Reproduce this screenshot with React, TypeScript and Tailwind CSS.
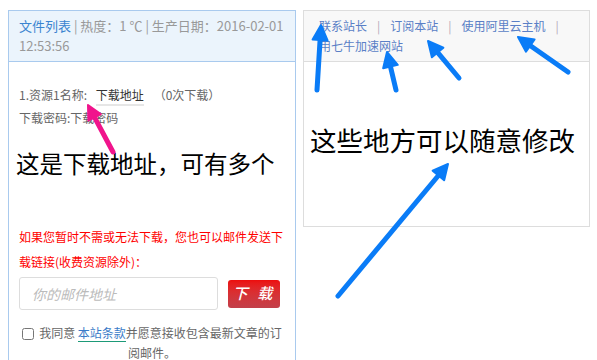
import React from 'react';

const FONT = { fontFamily: '"Microsoft YaHei", "Noto Sans CJK SC", "Noto Sans", sans-serif' };

type ArrowProps = { x1: number; y1: number; x2: number; y2: number; color: string; w?: number; head?: number };

// arrow drawn from tail (x1,y1) to tip (x2,y2)
const Arrow = ({ x1, y1, x2, y2, color, w = 5, head = 15 }: ArrowProps) => {
  const dx = x2 - x1;
  const dy = y2 - y1;
  const len = Math.sqrt(dx * dx + dy * dy);
  const ux = dx / len;
  const uy = dy / len;
  const bx = x2 - ux * head;
  const by = y2 - uy * head;
  const px = -uy * head * 0.5;
  const py = ux * head * 0.5;
  const pts = `${x2},${y2} ${bx + px},${by + py} ${bx - px},${by - py}`;
  return (
    <g>
      <line x1={x1} y1={y1} x2={bx + ux * 2} y2={by + uy * 2} stroke={color} strokeWidth={w} strokeLinecap="round" />
      <polygon points={pts} fill={color} stroke={color} strokeWidth={2} strokeLinejoin="round" />
    </g>
  );
};

const Sep = () => <span className="mx-[10px] text-[#b5a8b8]">|</span>;

const App = () => {
  return (
    <div className="relative w-[597px] h-[360px] overflow-hidden bg-white" style={FONT}>
      <div className="flex items-start gap-[7px] pl-[8px] pt-[10px]">
        {/* left panel */}
        <div className="w-[288px] h-[400px] border border-[#a9caee] bg-white">
          <div className="bg-[#ebf4fc] border-b border-[#a9caee] px-[10px] py-[5px] text-[13px] leading-[20px] text-[#999]">
            <div className="whitespace-nowrap">
              <span className="text-[#3a84d0]">文件列表</span> | 热度：1 ℃ | 生产日期：2016-02-01
            </div>
            <div>12:53:56</div>
          </div>
          <div className="px-[10px] pt-[21px]">
            <div className="text-[12px] leading-[24px] text-[#666]">
              1.资源1名称: <span className="ml-[6px] border-b-2 border-[#e6e6e6] pb-[1px] text-[#333]">下载地址</span>
              <span className="ml-[10px]">（0次下载）</span>
            </div>
            <div className="text-[12px] leading-[22px] text-[#666]">下载密码:下载密码</div>
            <div className="mt-[17px] -ml-[3px] text-[23.5px] leading-[34px] text-black whitespace-nowrap">这是下载地址，可有多个</div>
            <div className="mt-[44px] text-[12px] leading-[25px] text-[#f00]">
              如果您暂时不需或无法下载，您也可以邮件发送下载链接(收费资源除外)：
            </div>
            <div className="mt-[3px] flex items-center">
              <input
                type="text"
                placeholder="你的邮件地址"
                className="w-[199px] h-[33px] rounded-[3px] border border-[#ddd] px-[12px] text-[14px] italic placeholder:text-[#bbb] outline-none"
                style={FONT}
              />
              <button className="ml-[10px] w-[52px] h-[28px] rounded-[3px] bg-gradient-to-b from-[#ec0c0c] to-[#c2404a] text-white text-[15px] italic font-medium tracking-[3px]">
                下 载
              </button>
            </div>
            <div className="mt-[13px] text-center text-[12px] leading-[20px] text-[#666]">
              <input type="checkbox" className="w-[12px] h-[12px] align-[-2px] mr-[5px]" />
              我同意 <span className="text-[#3a7bc8] border-b border-[#1d9a78]">本站条款</span>并愿意接收包含最新文章的订阅邮件。
            </div>
          </div>
        </div>

        {/* right panel */}
        <div className="w-[287px] h-[217px] border border-[#ddd] bg-white">
          <div className="bg-[#f8f8f8] border-b border-[#ddd] pl-[15px] pr-[10px] py-[5px] text-[12px] leading-[20px] text-[#5a7fc6]">
            <span>联系站长</span>
            <Sep />
            <span>订阅本站</span>
            <Sep />
            <span>使用阿里云主机</span>
            <Sep />
            <span>用七牛加速网站</span>
          </div>
          <div className="pt-[60px] pl-[6px] text-[26.5px] leading-[36px] text-black whitespace-nowrap">这些地方可以随意修改</div>
        </div>
      </div>

      {/* annotation arrows */}
      <svg className="absolute left-0 top-0 pointer-events-none" width="597" height="360">
        <Arrow x1={113} y1={152} x2={88} y2={105} color="#f0148c" w={5} head={14} />
        <Arrow x1={317} y1={90} x2={321} y2={25} color="#0a7cf7" />
        <Arrow x1={396} y1={90} x2={387} y2={52} color="#0a7cf7" />
        <Arrow x1={459} y1={78} x2={428} y2={41} color="#0a7cf7" />
        <Arrow x1={568} y1={72} x2={518} y2={37} color="#0a7cf7" />
        <Arrow x1={338} y1={296} x2={448} y2={164} color="#0a7cf7" />
      </svg>
    </div>
  );
};

export default App;
